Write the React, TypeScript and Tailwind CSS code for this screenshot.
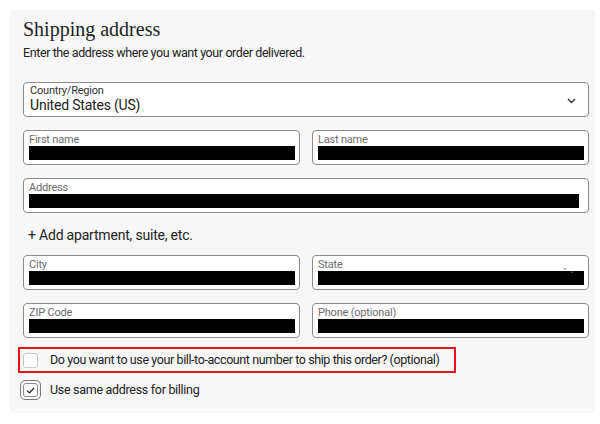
import React from 'react';

const sans = { fontFamily: 'Roboto, "Liberation Sans", sans-serif' };

interface FieldProps {
    label: string;
    barRight?: string;
    extra?: React.ReactNode;
}

const Field = ({ label, barRight = 'mr-[4px]', extra }: FieldProps) => (
    <div className="relative h-[35px] border border-[#8c8c8c] rounded-[4px] bg-white pl-[5px] pt-[3px] flex flex-col">
        <div className="text-[11px] leading-[12px] tracking-[-0.2px] text-[#6b6b6b]">{label}</div>
        <div className={`h-[14px] bg-black ${barRight}`} />
        {extra}
    </div>
);

const App: React.FC = () => {
    return (
        <div className="w-[600px] h-[424px] bg-white pt-[10px] pl-[10px]" style={sans}>
            <div className="w-[585px] h-[403px] bg-[#f7f7f7] pl-[13px] pr-[6px] pt-[7px] flex flex-col">
                <h2
                    className="text-[20px] leading-[24px] text-[#222]"
                    style={{ fontFamily: '"Liberation Serif", serif' }}
                >
                    Shipping address
                </h2>
                <p className="mt-[3px] text-[12.5px] leading-[18px] tracking-[-0.4px] text-[#222]">
                    Enter the address where you want your order delivered.
                </p>

                {/* Country select */}
                <div className="mt-[20px] h-[35px] border border-[#8c8c8c] rounded-[4px] bg-white pl-[6px] pr-[12px] pt-[2px] flex items-center justify-between">
                    <div className="flex flex-col self-start">
                        <span className="text-[11px] leading-[12px] tracking-[-0.2px] text-[#333]">Country/Region</span>
                        <span className="text-[14px] leading-[17px] tracking-[-0.2px] text-[#222]">United States (US)</span>
                    </div>
                    <svg width="9" height="6" viewBox="0 0 9 6" className="mt-[1px]">
                        <path d="M1 1 L4.5 4.5 L8 1" fill="none" stroke="#333" strokeWidth="1.4" />
                    </svg>
                </div>

                <div className="mt-[13px] grid grid-cols-2 gap-x-[12px]">
                    <Field label="First name" />
                    <Field label="Last name" />
                </div>

                <div className="mt-[13px]">
                    <Field label="Address" barRight="mr-[9px]" />
                </div>

                <div className="mt-[12px] pl-[5px] text-[14px] leading-[20px] tracking-[-0.2px] text-[#222]">
                    + Add apartment, suite, etc.
                </div>

                <div className="mt-[10px] grid grid-cols-2 gap-x-[12px]">
                    <Field label="City" />
                    <Field
                        label="State"
                        extra={
                            <span className="absolute right-[12px] top-[12px] text-[7px] leading-[6px] text-[#555] tracking-[1px]">
                                ⌃⌄
                            </span>
                        }
                    />
                </div>

                <div className="mt-[13px] grid grid-cols-2 gap-x-[12px]">
                    <Field label="ZIP Code" />
                    <Field label="Phone (optional)" />
                </div>

                <div className="mt-[9px] -ml-[5px] w-[438px] h-[26px] border-2 border-[#e3141b] pl-[3px] flex items-center gap-[12px]">
                    <span className="w-[15px] h-[15px] rounded-[3px] border border-[#c8c8c8] bg-white shrink-0" />
                    <span className="text-[12.5px] tracking-[-0.4px] whitespace-nowrap text-[#222]">
                        Do you want to use your bill-to-account number to ship this order? (optional)
                    </span>
                </div>

                <div className="mt-[7px] flex items-center gap-[9px]">
                    <span className="-ml-[3px] w-[21px] h-[20px] rounded-[5px] border border-[#7a7a7a] flex items-center justify-center">
                        <span className="w-[15px] h-[14px] rounded-[3px] border border-[#8c8c8c] bg-white flex items-center justify-center">
                            <svg width="9" height="7" viewBox="0 0 9 7">
                                <path d="M1 3.6 L3.4 6 L8 1" fill="none" stroke="#222" strokeWidth="1.2" />
                            </svg>
                        </span>
                    </span>
                    <span className="text-[12.5px] tracking-[-0.3px] text-[#222]">Use same address for billing</span>
                </div>
            </div>
        </div>
    );
};

export default App;
